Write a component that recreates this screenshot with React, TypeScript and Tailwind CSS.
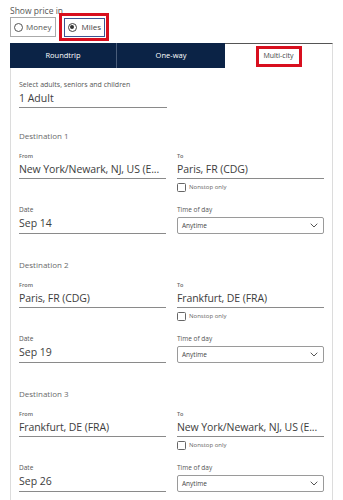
import React from "react";

const font = { fontFamily: '"Open Sans", "Noto Sans", Arial, sans-serif' };

function Underlined({ label, value }: { label: string; value: string }) {
  return (
    <div>
      <div className="text-[5.5px] leading-[8px] font-semibold text-[#666]">{label}</div>
      <div className="mt-[1px] border-b border-[#8a8a8a] pb-[1px] text-[10.5px] tracking-[-0.1px] leading-[16px] text-[#3d3d3d] whitespace-nowrap overflow-hidden">
        {value}
      </div>
    </div>
  );
}

function Nonstop() {
  return (
    <div className="mt-[4px] flex items-center h-[9px]">
      <div className="w-[9px] h-[9px] border border-[#666] rounded-[1.5px]" />
      <span className="ml-[3px] text-[6px] leading-[9px] text-[#666]">Nonstop only</span>
    </div>
  );
}

function Destination({
  n,
  from,
  to,
  date,
  first,
}: {
  n: number;
  from: string;
  to: string;
  date: string;
  first?: boolean;
}) {
  return (
    <div className={first ? "mt-[22px]" : "mt-[25px]"}>
      <div className="text-[8px] leading-[12px] text-[#6a6a6a]">Destination {n}</div>
      <div className="mt-[10px] grid grid-cols-2 gap-x-[11px]">
        <div className="self-start">
          <Underlined label="From" value={from} />
        </div>
        <div>
          <Underlined label="To" value={to} />
          <Nonstop />
        </div>
      </div>
      <div className="mt-[13px] grid grid-cols-2 gap-x-[11px]">
        <div>
          <div className="text-[6.5px] leading-[9px] text-[#555]">Date</div>
          <div className="mt-[1px] border-b border-[#8a8a8a] pb-[2px] text-[10.5px] leading-[16px] text-[#3d3d3d]">
            {date}
          </div>
        </div>
        <div>
          <div className="text-[6.5px] leading-[9px] text-[#555]">Time of day</div>
          <div className="mt-[3px] h-[17px] border border-[#9a9a9a] rounded-[2px] flex items-center justify-between px-[4px]">
            <span className="text-[6.5px] text-[#444]">Anytime</span>
            <svg width="8" height="5" viewBox="0 0 8 5" className="mr-[1px]">
              <path d="M0.7 0.7 L4 4 L7.3 0.7" fill="none" stroke="#555" strokeWidth="1" />
            </svg>
          </div>
        </div>
      </div>
    </div>
  );
}

export default function App() {
  return (
    <div className="w-[343px] h-[500px] bg-white overflow-hidden" style={font}>
      <div className="px-[10px] pt-[6px]">
        <div className="text-[8.5px] leading-[10px] text-[#555]">Show price in</div>
        <div className="mt-[-4px] flex items-center h-[30px]">
          <div className="h-[20px] w-[46px] border border-[#aaa] flex items-center pl-[3px]">
            <div className="w-[9px] h-[9px] rounded-full border border-[#555]" />
            <span className="ml-[3px] text-[8px] text-[#555]">Money</span>
          </div>
          <div className="ml-[3px] h-[28px] w-[50px] border-[3px] border-[#d80f1e] flex items-center justify-center">
            <div className="h-[19px] w-[41px] border-[1.5px] border-[#3b5594] flex items-center pl-[3px]">
              <div className="w-[9px] h-[9px] rounded-full border border-[#444] flex items-center justify-center">
                <div className="w-[4px] h-[4px] rounded-full bg-[#333]" />
              </div>
              <span className="ml-[5px] text-[8px] text-[#444]">Miles</span>
            </div>
          </div>
        </div>
        <div className="mt-[1px] flex h-[25px]">
          <div className="w-[107px] bg-[#0b2346] flex items-center justify-center text-[7.5px] text-white border-r border-[#4a5d7a]">
            Roundtrip
          </div>
          <div className="w-[108px] bg-[#0b2346] flex items-center justify-center text-[7.5px] text-white">
            One-way
          </div>
          <div className="flex-1 bg-white border-t-[1.5px] border-t-[#555] border-r border-r-[#ddd] flex items-center justify-center">
            <div className="h-[21px] w-[46px] border-[3px] border-[#d80f1e] flex items-center justify-center text-[7px] text-[#444]">
              Multi-city
            </div>
          </div>
        </div>
        <div className="border-x border-[#dcdcdc] px-[8px] pt-[12px] h-[440px]">
          <div className="w-[148px]">
            <div className="text-[7px] leading-[9px] text-[#555]">Select adults, seniors and children</div>
            <div className="mt-[1px] border-b border-[#8a8a8a] pb-[1px] text-[10.5px] leading-[16px] text-[#3d3d3d]">
              1 Adult
            </div>
          </div>
          <Destination n={1} first from="New York/Newark, NJ, US (E..." to="Paris, FR (CDG)" date="Sep 14" />
          <Destination n={2} from="Paris, FR (CDG)" to="Frankfurt, DE (FRA)" date="Sep 19" />
          <Destination n={3} from="Frankfurt, DE (FRA)" to="New York/Newark, NJ, US (E..." date="Sep 26" />
        </div>
      </div>
    </div>
  );
}
